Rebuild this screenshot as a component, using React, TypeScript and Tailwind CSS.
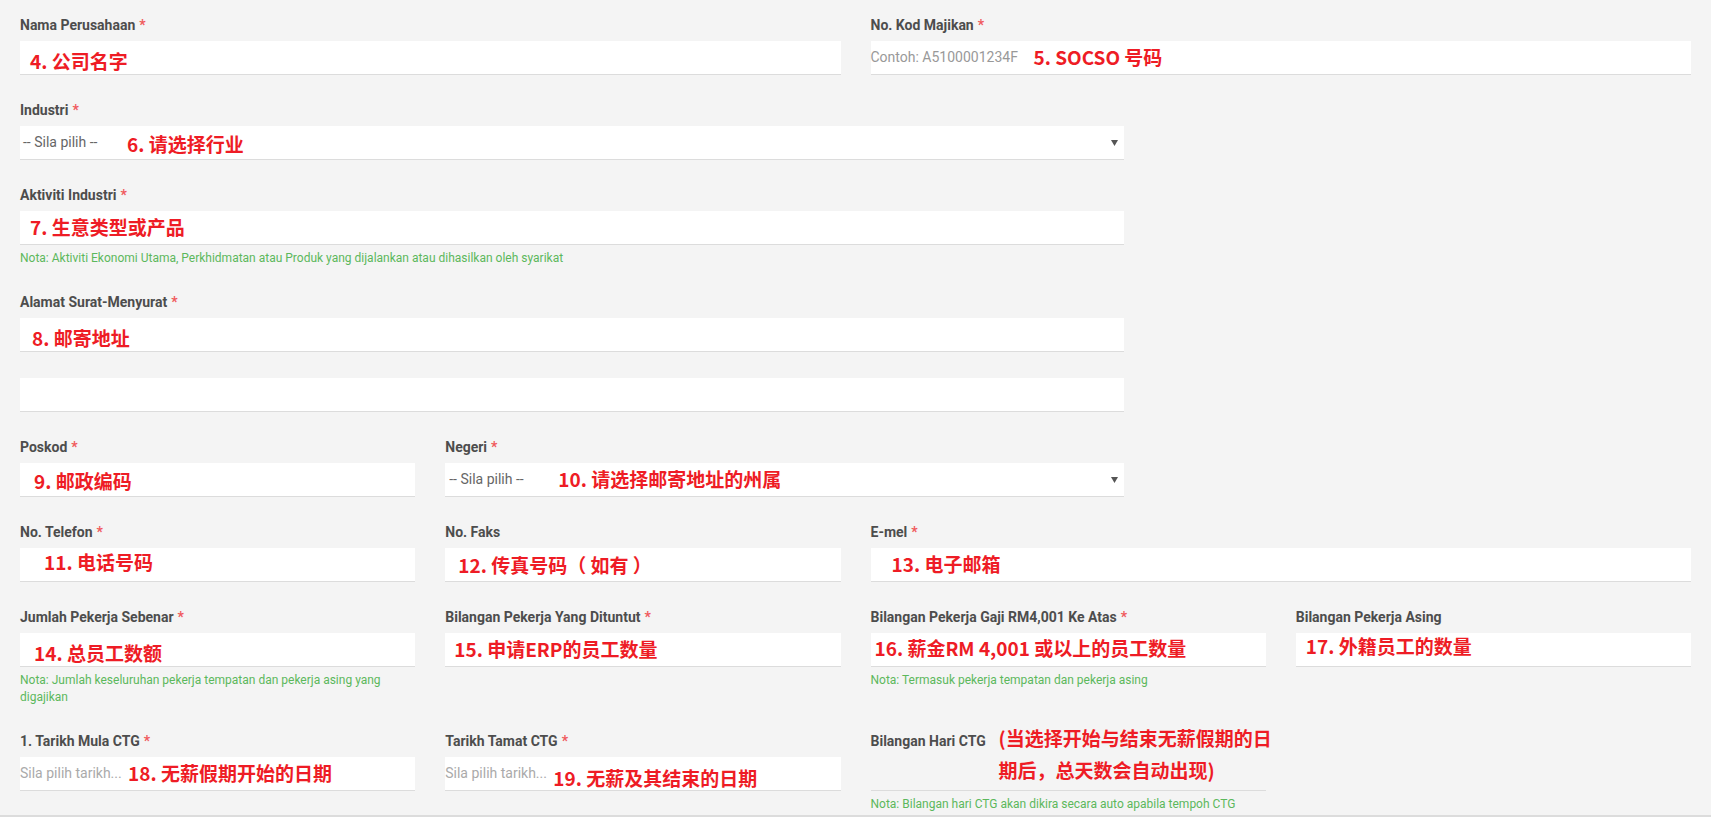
import React from "react";

const ANN =
  "absolute whitespace-nowrap font-['Noto_Sans_CJK_SC',sans-serif] font-bold text-[19px] leading-[20px] text-[#ee1c25]";

function Label({ text, req }: { text: string; req?: boolean }) {
  return (
    <div className="h-[20px] leading-[20px] mb-[6px] text-[14px] font-bold text-[#4d4d4d] whitespace-nowrap">
      {text}
      {req && <span className="text-[#f0595c] ml-[4px]">*</span>}
    </div>
  );
}

function Note({ children }: { children: React.ReactNode }) {
  return (
    <div className="mt-[5px] text-[12px] leading-[17px] text-[#5cb85c]">{children}</div>
  );
}

function Box({ children, select }: { children?: React.ReactNode; select?: boolean }) {
  return (
    <div className="relative h-[34px] bg-white border-b border-[#dcdcdc] flex items-center text-[14px]">
      {children}
      {select && (
        <svg
          className="absolute right-[6px] top-[14px]"
          width="7"
          height="6"
          viewBox="0 0 7 6"
        >
          <polygon points="0,0 7,0 3.5,6" fill="#555" />
        </svg>
      )}
    </div>
  );
}

export default function App() {
  return (
    <div className="min-h-screen bg-[#f4f4f4] font-['Roboto','Noto_Sans_CJK_SC',sans-serif]">
      <div className="flex flex-col gap-y-[25px] px-[20px] pt-[15px] pb-[2px] border-b-2 border-[#dcdcdc]">
        {/* Row 1 */}
        <div className="grid grid-cols-12 gap-x-[30px]">
          <div className="col-span-6">
            <Label text="Nama Perusahaan" req />
            <Box>
              <span className={`${ANN} left-[10px] top-[10px]`}>4. 公司名字</span>
            </Box>
          </div>
          <div className="col-span-6">
            <Label text="No. Kod Majikan" req />
            <Box>
              <span className="text-[14px] text-[#999]">Contoh: A5100001234F</span>
              <span className={`${ANN} left-[163px] top-[6px]`}>5. SOCSO 号码</span>
            </Box>
          </div>
        </div>

        {/* Row 2 */}
        <div className="grid grid-cols-12 gap-x-[30px]">
          <div className="col-span-8">
            <Label text="Industri" req />
            <Box select>
              <span className="pl-[3px] text-[14px] text-[#666]">-- Sila pilih --</span>
              <span className={`${ANN} left-[107px] top-[8px]`}>6. 请选择行业</span>
            </Box>
          </div>
        </div>

        {/* Row 3 */}
        <div className="grid grid-cols-12 gap-x-[30px]">
          <div className="col-span-8">
            <Label text="Aktiviti Industri" req />
            <Box>
              <span className={`${ANN} left-[10px] top-[6px]`}>7. 生意类型或产品</span>
            </Box>
            <Note>
              Nota: Aktiviti Ekonomi Utama, Perkhidmatan atau Produk yang dijalankan atau dihasilkan oleh syarikat
            </Note>
          </div>
        </div>

        {/* Row 4 */}
        <div className="grid grid-cols-12 gap-x-[30px]">
          <div className="col-span-8">
            <Label text="Alamat Surat-Menyurat" req />
            <Box>
              <span className={`${ANN} left-[12px] top-[10px]`}>8. 邮寄地址</span>
            </Box>
          </div>
        </div>

        {/* Row 4b */}
        <div className="grid grid-cols-12 gap-x-[30px] mt-[1px]">
          <div className="col-span-8">
            <Box />
          </div>
        </div>

        {/* Row 5 */}
        <div className="grid grid-cols-12 gap-x-[30px]">
          <div className="col-span-3">
            <Label text="Poskod" req />
            <Box>
              <span className={`${ANN} left-[14px] top-[8px]`}>9. 邮政编码</span>
            </Box>
          </div>
          <div className="col-span-5">
            <Label text="Negeri" req />
            <Box select>
              <span className="pl-[4px] text-[14px] text-[#666]">-- Sila pilih --</span>
              <span className={`${ANN} left-[113px] top-[6px]`}>10. 请选择邮寄地址的州属</span>
            </Box>
          </div>
        </div>

        {/* Row 6 */}
        <div className="grid grid-cols-12 gap-x-[30px]">
          <div className="col-span-3">
            <Label text="No. Telefon" req />
            <Box>
              <span className={`${ANN} left-[24px] top-[4px]`}>11. 电话号码</span>
            </Box>
          </div>
          <div className="col-span-3">
            <Label text="No. Faks" />
            <Box>
              <span className={`${ANN} left-[13px] top-[7px]`}>12. 传真号码（ 如有 ）</span>
            </Box>
          </div>
          <div className="col-span-6">
            <Label text="E-mel" req />
            <Box>
              <span className={`${ANN} left-[21px] top-[6px]`}>13. 电子邮箱</span>
            </Box>
          </div>
        </div>

        {/* Row 7 */}
        <div className="grid grid-cols-12 gap-x-[30px]">
          <div className="col-span-3">
            <Label text="Jumlah Pekerja Sebenar" req />
            <Box>
              <span className={`${ANN} left-[14px] top-[10px]`}>14. 总员工数额</span>
            </Box>
            <Note>Nota: Jumlah keseluruhan pekerja tempatan dan pekerja asing yang digajikan</Note>
          </div>
          <div className="col-span-3">
            <Label text="Bilangan Pekerja Yang Dituntut" req />
            <Box>
              <span className={`${ANN} left-[9px] top-[6px]`}>15. 申请ERP的员工数量</span>
            </Box>
          </div>
          <div className="col-span-3">
            <Label text="Bilangan Pekerja Gaji RM4,001 Ke Atas" req />
            <Box>
              <span className={`${ANN} left-[4px] top-[5px]`}>16. 薪金RM 4,001 或以上的员工数量</span>
            </Box>
            <Note>Nota: Termasuk pekerja tempatan dan pekerja asing</Note>
          </div>
          <div className="col-span-3">
            <Label text="Bilangan Pekerja Asing" />
            <Box>
              <span className={`${ANN} left-[10px] top-[3px]`}>17. 外籍员工的数量</span>
            </Box>
          </div>
        </div>

        {/* Row 8 */}
        <div className="grid grid-cols-12 gap-x-[30px]">
          <div className="col-span-3">
            <Label text="1. Tarikh Mula CTG" req />
            <Box>
              <span className="text-[14px] text-[#aaa]">Sila pilih tarikh...</span>
              <span className={`${ANN} left-[108px] top-[6px]`}>18. 无薪假期开始的日期</span>
            </Box>
          </div>
          <div className="col-span-3">
            <Label text="Tarikh Tamat CTG" req />
            <Box>
              <span className="text-[14px] text-[#aaa]">Sila pilih tarikh...</span>
              <span className={`${ANN} left-[108px] top-[11px]`}>19. 无薪及其结束的日期</span>
            </Box>
          </div>
          <div className="col-span-3 relative">
            <Label text="Bilangan Hari CTG" />
            <span className={`${ANN} left-[128px] top-[-9px] leading-[32px]`}>
              (当选择开始与结束无薪假期的日
              <br />
              期后，总天数会自动出现)
            </span>
            <div className="h-[34px] border-b border-[#dcdcdc]" />
            <Note>Nota: Bilangan hari CTG akan dikira secara auto apabila tempoh CTG</Note>
          </div>
        </div>
      </div>
    </div>
  );
}
